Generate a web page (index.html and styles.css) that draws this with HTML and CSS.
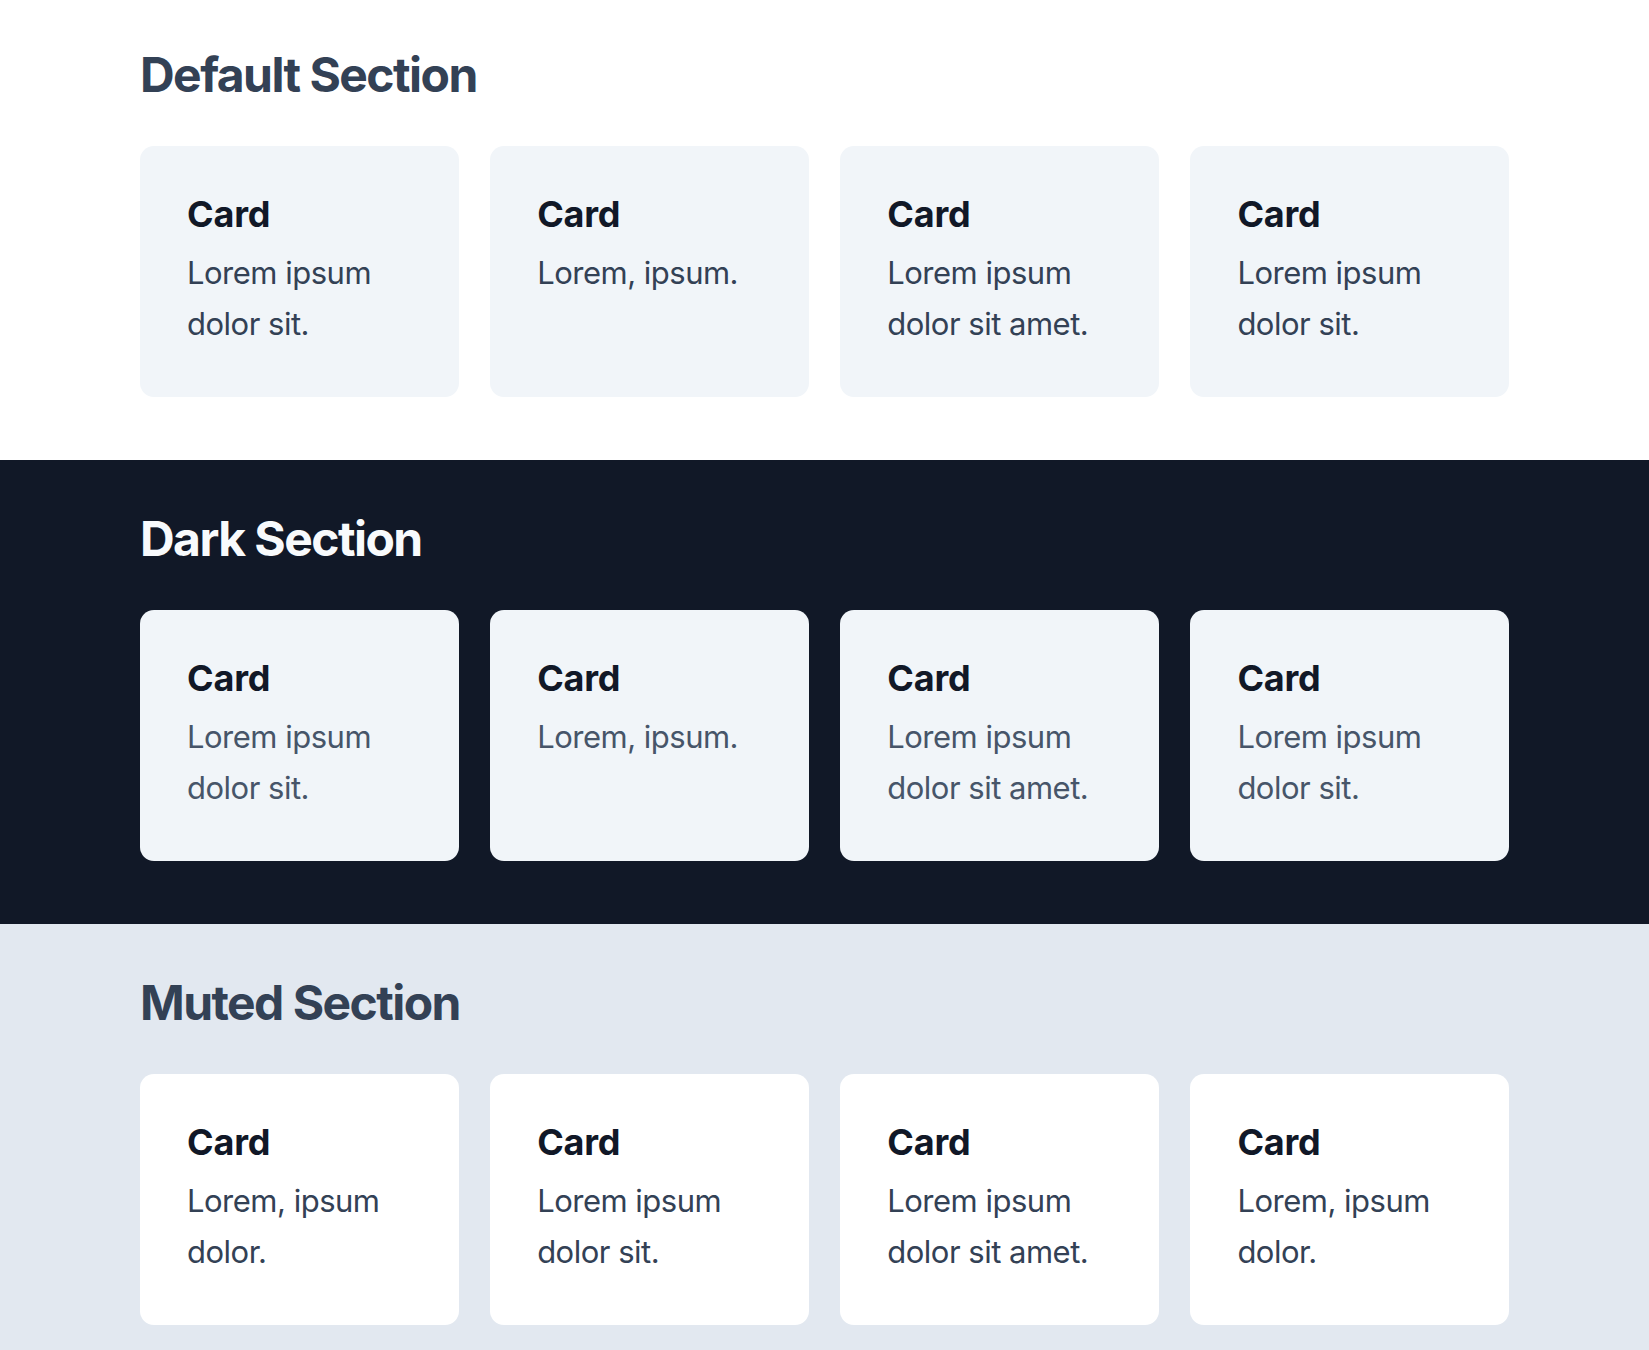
FILE: index.html
```html
<!DOCTYPE html>
<html lang="en">
<head>
<meta charset="utf-8">
<title>Sections</title>
<link rel="stylesheet" href="styles.css">
</head>
<body>
  <section class="section section--default">
    <div class="container">
      <h2 class="section__title">Default Section</h2>
      <div class="cards">
        <div class="card"><h3 class="card__title">Card</h3><p class="card__text">Lorem ipsum dolor sit.</p></div>
        <div class="card"><h3 class="card__title">Card</h3><p class="card__text">Lorem, ipsum.</p></div>
        <div class="card"><h3 class="card__title">Card</h3><p class="card__text">Lorem ipsum dolor sit amet.</p></div>
        <div class="card"><h3 class="card__title">Card</h3><p class="card__text">Lorem ipsum dolor sit.</p></div>
      </div>
    </div>
  </section>
  <section class="section section--dark">
    <div class="container">
      <h2 class="section__title">Dark Section</h2>
      <div class="cards">
        <div class="card"><h3 class="card__title">Card</h3><p class="card__text">Lorem ipsum dolor sit.</p></div>
        <div class="card"><h3 class="card__title">Card</h3><p class="card__text">Lorem, ipsum.</p></div>
        <div class="card"><h3 class="card__title">Card</h3><p class="card__text">Lorem ipsum dolor sit amet.</p></div>
        <div class="card"><h3 class="card__title">Card</h3><p class="card__text">Lorem ipsum dolor sit.</p></div>
      </div>
    </div>
  </section>
  <section class="section section--muted">
    <div class="container">
      <h2 class="section__title">Muted Section</h2>
      <div class="cards">
        <div class="card"><h3 class="card__title">Card</h3><p class="card__text">Lorem, ipsum dolor.</p></div>
        <div class="card"><h3 class="card__title">Card</h3><p class="card__text">Lorem ipsum dolor sit.</p></div>
        <div class="card"><h3 class="card__title">Card</h3><p class="card__text">Lorem ipsum dolor sit amet.</p></div>
        <div class="card"><h3 class="card__title">Card</h3><p class="card__text">Lorem, ipsum dolor.</p></div>
      </div>
    </div>
  </section>
</body>
</html>
```

FILE: styles.css
```css
* { box-sizing: border-box; }

html, body {
  margin: 0;
  padding: 0;
}

body {
  font-family: Inter, "Noto Sans", "Liberation Sans", sans-serif;
  background: #ffffff;
}

.section {
  padding: 50px 0 63px;
}

.section--default {
  background: #ffffff;
  padding-top: 46px;
}

.section--dark {
  background: #111827;
}

.section--muted {
  background: #e2e8f0;
}

.container {
  width: 1369px;
  margin: 0 auto;
}

.section__title {
  margin: 0 0 42px;
  font-size: 48px;
  line-height: 58px;
  font-weight: 700;
  letter-spacing: -1.55px;
  color: #334155;
}

.section--dark .section__title {
  color: #f8fafc;
}

.cards {
  display: grid;
  grid-template-columns: repeat(4, 1fr);
  gap: 31.5px;
}

.card {
  background: #f1f5f9;
  border-radius: 14px;
  padding: 48px 47px;
  height: 251px;
}

.section--muted .card {
  background: #ffffff;
}

.card__title {
  margin: 0 0 14px;
  font-size: 36px;
  line-height: 40px;
  font-weight: 700;
  letter-spacing: -0.2px;
  color: #111827;
}

.card__text {
  margin: 0;
  font-size: 31px;
  line-height: 50.5px;
  font-weight: 400;
  letter-spacing: -0.5px;
  color: #334155;
}

.section--dark .card__text {
  color: #475569;
}
```
